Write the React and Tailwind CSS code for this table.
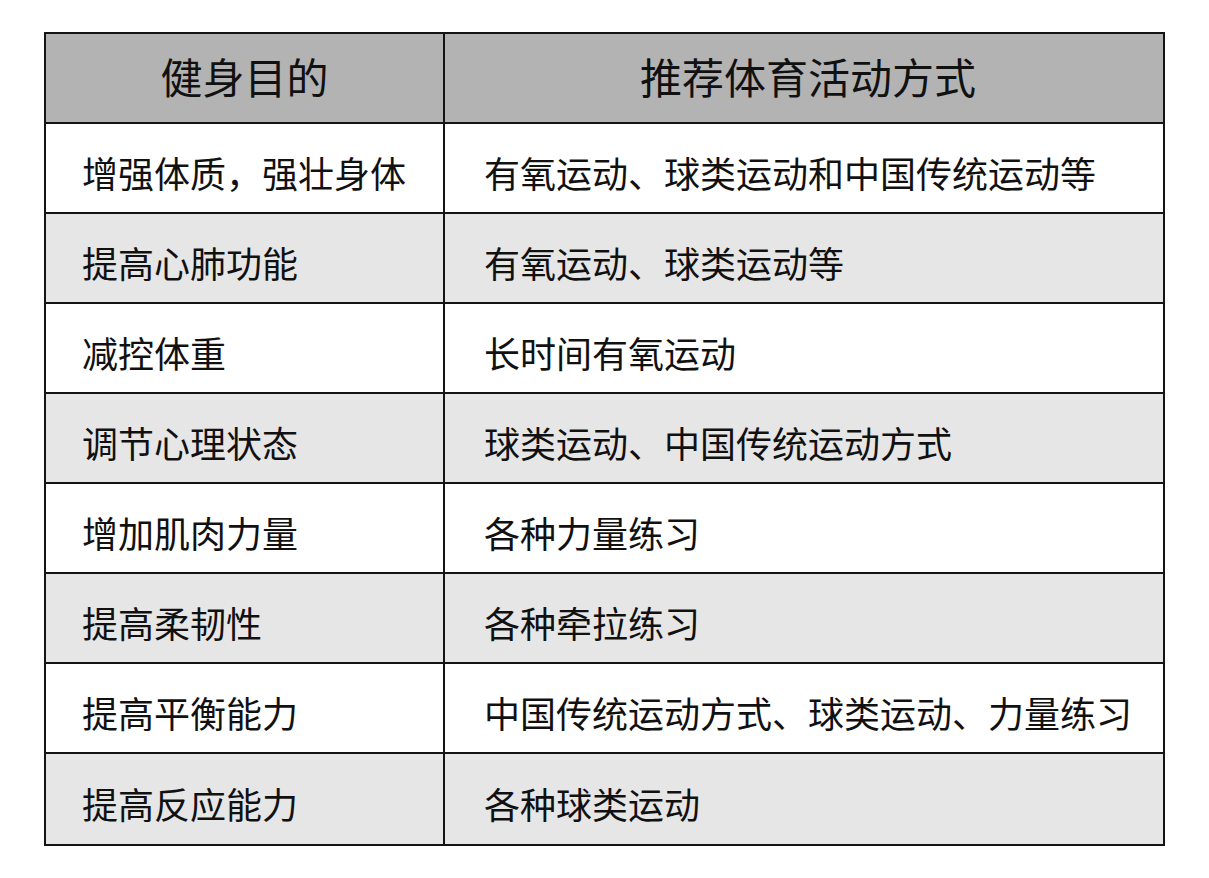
import React from "react";

const rows = [
  ["增强体质，强壮身体", "有氧运动、球类运动和中国传统运动等"],
  ["提高心肺功能", "有氧运动、球类运动等"],
  ["减控体重", "长时间有氧运动"],
  ["调节心理状态", "球类运动、中国传统运动方式"],
  ["增加肌肉力量", "各种力量练习"],
  ["提高柔韧性", "各种牵拉练习"],
  ["提高平衡能力", "中国传统运动方式、球类运动、力量练习"],
  ["提高反应能力", "各种球类运动"],
];

const font = {
  fontFamily: '"Noto Sans CJK SC", "Noto Sans", sans-serif',
};

export default function App() {
  return (
    <div className="w-[1209px] h-[878px] bg-white pl-[44px] pt-[32px]" style={font}>
      <div className="w-[1121px] border-2 border-[#141414] text-[#111]">
        {/* header */}
        <div className="flex h-[90px] bg-[#b3b3b3] border-b-2 border-[#141414]">
          <div className="w-[399px] border-r-2 border-[#141414] flex items-center justify-center text-[42px] pb-[6px]">
            健身目的
          </div>
          <div className="flex-1 flex items-center justify-center text-[42px] pb-[6px] pl-2">
            推荐体育活动方式
          </div>
        </div>

        {rows.map(([goal, activity], i) => (
          <div
            key={goal}
            className={
              "flex h-[90px] " +
              (i < rows.length - 1 ? "border-b-2 border-[#141414] " : "h-[88px] ") +
              (i % 2 === 0 ? "bg-white" : "bg-[#e6e6e6]")
            }
          >
            <div className="w-[399px] border-r-2 border-[#141414] flex items-center pl-[36px] pt-[7px] text-[36px]">
              {goal}
            </div>
            <div className="flex-1 flex items-center pl-[39px] pt-[7px] text-[36px] whitespace-nowrap">
              {activity}
            </div>
          </div>
        ))}
      </div>
    </div>
  );
}
